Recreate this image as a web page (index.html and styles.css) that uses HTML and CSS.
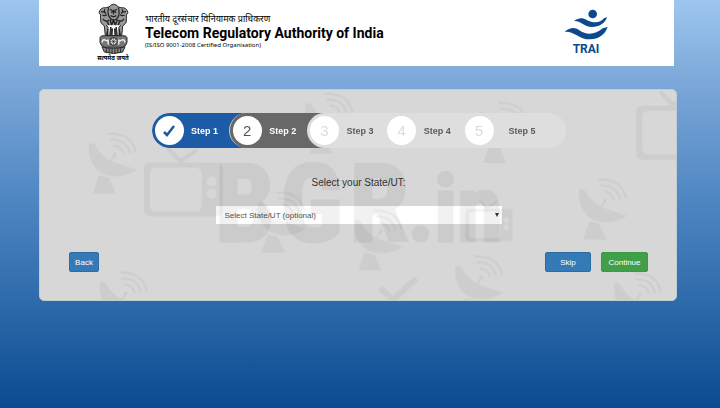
FILE: index.html
```html
<!DOCTYPE html>
<html lang="en">
<head>
    <meta charset="UTF-8">
    <meta name="viewport" content="width=device-width, initial-scale=1.0">
    <title>Telecom Regulatory Authority of India</title>
    <link rel="stylesheet" href="styles.css">
</head>
<body>

    <!-- Header -->
    <header class="site-header">
        <div class="emblem">
            <svg class="emblem-icon" viewBox="0 0 62 106" fill="none" stroke="#222" stroke-width="2">
                <path d="M22 8Q31-3 41 8L47 10Q58 8 61 20Q56 24 58 32Q60 42 50 48L48 68H14L12 48Q2 42 4 32Q6 24 1 20Q4 8 15 10Z" fill="#999"/>
                <path d="M21 9Q17 22 23 30Q31 42 40 30Q45 22 41 9M24 13l5 3M38 13l-5 3M31 14v10M25 26q6 5 12 0M26 20l3-2 4 0 4 2" stroke-width="2.5"/>
                <path d="M5 18l8 1M8 25q5 3 9-1M57 18l-8 1M54 25q-5 3-9-1M9 33q5 8 13 3M53 33q-5 8-13 3M13 13q-3 5 2 9M49 13q3 5-2 9" stroke-width="2.5"/>
                <path d="M24 34l3 12 4-10 4 10 4-12M18 38l4 10M44 38l-4 10" stroke-width="3"/>
                <path d="M16 46l4 5-4 17h7l2-18 4 4-1 14h6l-1-14 4-4 2 18h7l-4-17 4-5" fill="#fff" stroke-width="2"/>
                <path d="M19 54v14M26 54v14M36 54v14M43 54v14" stroke-width="3"/>
                <path d="M3 72Q4 67 12 68H50Q58 67 59 72V82Q57 90 50 92H12Q5 90 3 82Z" fill="#777"/>
                <circle cx="31" cy="80" r="8" fill="#ddd"/>
                <path d="M31 72v16M23 80h16M25 74l12 12M37 74L25 86" stroke-width="1"/>
                <path d="M7 82q2-8 7-5t6-1v10M55 82q-2-8-7-5t-6-1v10" stroke="#eee" stroke-width="3"/>
                <path d="M7 91Q31 98 55 91L50 102Q31 108 12 102Z" fill="#888"/>
                <path d="M16 94v8M22 95v9M28 96v9M34 96v9M40 95v9M46 94v8"/>
            </svg>
            <span class="emblem-motto" lang="hi">सत्यमेव जयते</span>
        </div>
        <div class="brand">
            <p class="brand-hindi" lang="hi">भारतीय दूरसंचार विनियामक प्राधिकरण</p>
            <h1>Telecom Regulatory Authority of India</h1>
            <p class="brand-note">(IS/ISO 9001-2008 Certified Organisation)</p>
        </div>
        <div class="trai">
            <svg class="trai-icon" viewBox="282 26 132 93" fill="#0c4a8c">
                <circle cx="368" cy="41" r="13"/>
                <path d="M312 62C325 52 338 51 350 59C373 71 391 67 403 53L411 51C405 69 388 80 366 80C340 80 337 62 312 62Z"/>
                <path d="M284 94C300 81 315 80 328 90C350 106 378 102 398 84L413 80C405 103 385 117 360 117C325 117 315 92 284 94Z"/>
            </svg>
            <span>TRAI</span>
        </div>
    </header>

    <main class="card">
        <!-- Faded artwork over the panel -->
        <svg class="artwork" viewBox="40 89 637 211" preserveAspectRatio="xMidYMid slice" aria-hidden="true">
            <defs>
                <g id="dish">
                    <path d="M1 12C-1 28 8 42 22 44Q36 47 49 38L24 30Q12 24 7 13Q3 10 1 12Z"/>
                    <path d="M4 14Q12 34 46 38" fill="none" stroke="#fff" stroke-opacity=".3"/>
                    <path d="M11 44L5 62H28L21 46Z"/>
                    <circle cx="27" cy="23" r="2"/>
                    <path d="M22 31L27 23" fill="none" stroke="#000" stroke-width="2"/>
                    <path d="M25 14Q34 14 36 23M22 8Q39 7 42 22M20 2Q44 1 48 21" fill="none" stroke="#000" stroke-width="2"/>
                </g>
                <g id="tv">
                    <path fill-rule="evenodd" d="M6 14H72Q79 14 79 21V61Q79 68 72 68H6Q0 68 0 61V21Q0 14 6 14ZM13 19Q6 19 6 26V56Q6 63 13 63H51Q58 63 58 56V26Q58 19 51 19ZM68 28a5 5 0 1 0 .1 0ZM68 40a5 5 0 1 0 .1 0Z"/>
                    <path d="M24 0L37 13L53 1" fill="none" stroke="#000" stroke-width="4"/>
                </g>
            </defs>
            <g opacity=".045">
                <use href="#dish" x="88" y="131"/>
                <use href="#dish" x="305" y="91"/>
                <use href="#dish" x="479" y="100"/>
                <use href="#dish" x="579" y="177"/>
                <use href="#dish" x="99" y="270"/>
                <use href="#dish" x="614" y="271"/>
                <use href="#dish" x="455" y="254"/>
                <use href="#dish" x="257" y="190"/>
                <use href="#dish" x="354" y="208"/>
                <use href="#tv" x="144" y="148"/>
                <use href="#tv" x="637" y="91"/>
                <use href="#tv" transform="translate(466 200) scale(.6)"/>
                <path d="M381 288L394 299L417 278" fill="none" stroke="#000" stroke-width="6"/>
            </g>
            <text class="watermark" x="215 281 350" y="241">BGR<tspan class="watermark-end" x="408">.in</tspan></text>
        </svg>

        <!-- Steps -->
        <ol class="steps">
            <li class="step done">
                <span class="bubble">
                    <svg class="tick" viewBox="0 0 12 12" fill="none" stroke="#1f5a9c" stroke-width="2.5"><path d="M1 7L4 10L11 1"/></svg>
                </span>
                <span class="step-name">Step 1</span>
            </li>
            <li class="step active"><span class="bubble">2</span><span class="step-name">Step 2</span></li>
            <li class="step"><span class="bubble">3</span><span class="step-name">Step 3</span></li>
            <li class="step"><span class="bubble">4</span><span class="step-name">Step 4</span></li>
            <li class="step last"><span class="bubble">5</span><span class="step-name">Step 5</span></li>
        </ol>

        <!-- State form -->
        <form class="state-form">
            <label for="state">Select your State/UT:</label>
            <div class="select-box">
                <select id="state">
                    <option>Select State/UT (optional)</option>
                </select>
            </div>
            <div class="form-actions">
                <button type="button" class="btn btn-back">Back</button>
                <button type="button" class="btn btn-skip">Skip</button>
                <button type="submit" class="btn btn-continue">Continue</button>
            </div>
        </form>
    </main>

</body>
</html>
```

FILE: styles.css
```css
* {
    margin: 0;
    padding: 0;
    box-sizing: border-box;
}

body {
    min-height: 100vh;
    padding: 0 43px 0 39px;
    font-family: "Liberation Sans", Arial, sans-serif;
    background: linear-gradient(#9dc6ef 0%, #7ca8d9 20%, #4d85c1 50%, #2b68a8 76%, #0b4a91 100%) no-repeat;
    color: #333;
}

/* Header */
.site-header {
    display: flex;
    height: 66px;
    margin-right: 3px;
    padding: 3px 66px 0 57px;
    background-color: #fff;
    color: #000;
}

.emblem {
    display: flex;
    flex-direction: column;
    align-items: center;
    width: 34px;
}

.emblem-icon {
    width: 31px;
    height: 51px;
}

.emblem-motto {
    font: bold 6px/8px "Noto Sans", sans-serif;
    white-space: nowrap;
}

.brand {
    margin-left: 15px;
    padding-top: 9px;
    white-space: nowrap;
}

.brand-hindi {
    font: 9px/13px "Noto Sans", sans-serif;
}

.brand h1 {
    font: bold 14px/17px Roboto, sans-serif;
}

.brand-note {
    font: 6px/7px "Noto Sans", sans-serif;
}

.trai {
    display: flex;
    flex-direction: column;
    align-items: center;
    margin-left: auto;
    padding-top: 6px;
    color: #0c4a8c;
    font: bold 12px/14px Roboto, sans-serif;
}

.trai-icon {
    width: 44px;
    height: 31px;
    margin-bottom: 2px;
}

/* Panel */
.card {
    position: relative;
    margin-top: 23px;
    padding: 23px 28px 28px 29px;
    border: 1px solid #c3cbd3;
    border-radius: 5px;
    background-color: #d7d7d7;
}

.artwork {
    position: absolute;
    top: 0;
    left: 0;
    width: 100%;
    height: 100%;
    z-index: 1;
    pointer-events: none;
}

.watermark {
    font: bold 107px "Liberation Sans Narrow", "Roboto Condensed", sans-serif;
    fill: #000;
    stroke: #000;
    stroke-width: 3px;
    opacity: 0.055;
}

.watermark-end {
    font-size: 92px;
}

/* Steps */
.steps {
    display: flex;
    position: relative;
    z-index: 2;
    width: 100%;
    max-width: 414px;
    margin: 0 auto;
    list-style: none;
    border-radius: 18px;
    overflow: hidden;
}

.step {
    display: flex;
    align-items: center;
    flex: 1;
    height: 35px;
    padding: 0 21px 0 3px;
    border-radius: 18px 0 0 18px;
    background-color: #dedede;
    color: #5c5c5c;
    font-size: 9px;
    font-weight: bold;
}

.step + .step {
    margin-left: -18px;
}

.step.done {
    background-color: #1c5ba5;
    color: #fff;
}

.step.active {
    border-left: 1px solid #c9c9c9;
    background-color: #686868;
    color: #fff;
}

.step.last {
    flex: 0 0 104px;
    padding-right: 15px;
}

.bubble {
    display: flex;
    align-items: center;
    justify-content: center;
    flex: none;
    width: 29px;
    height: 29px;
    border-radius: 50%;
    background-color: #fff;
    color: #dcdcdc;
    font-size: 15px;
    font-weight: normal;
}

.active .bubble {
    color: #555;
}

.tick {
    width: 12px;
    height: 12px;
}

.step-name {
    flex: 1;
    text-align: center;
    white-space: nowrap;
}

/* Form */
.state-form {
    display: flex;
    flex-direction: column;
    align-items: center;
    padding-top: 29px;
}

.state-form label {
    font-size: 10px;
    line-height: 12px;
}

.select-box {
    position: relative;
    width: 100%;
    max-width: 286px;
    margin-top: 17px;
}

.select-box::after {
    content: "";
    position: absolute;
    top: 7px;
    right: 3px;
    border: 2px solid transparent;
    border-top: 4px solid #333;
    border-bottom: 0;
}

select {
    display: block;
    width: 100%;
    height: 18px;
    padding: 0 9px;
    border: none;
    border-radius: 0;
    background-color: #fff;
    color: #555;
    font: 8px "Liberation Sans", Arial, sans-serif;
    appearance: none;
}

.form-actions {
    display: flex;
    align-self: stretch;
    gap: 10px;
    margin-top: 28px;
}

.btn {
    height: 20px;
    border: 1px solid #2e6da4;
    border-radius: 2px;
    background-color: #337ab7;
    color: #fff;
    font: 8px "Liberation Sans", Arial, sans-serif;
    cursor: pointer;
}

.btn-back {
    width: 30px;
    margin-right: auto;
}

.btn-skip {
    width: 46px;
}

.btn-continue {
    width: 47px;
    border-color: #3c9a44;
    background-color: #419f49;
}
```
